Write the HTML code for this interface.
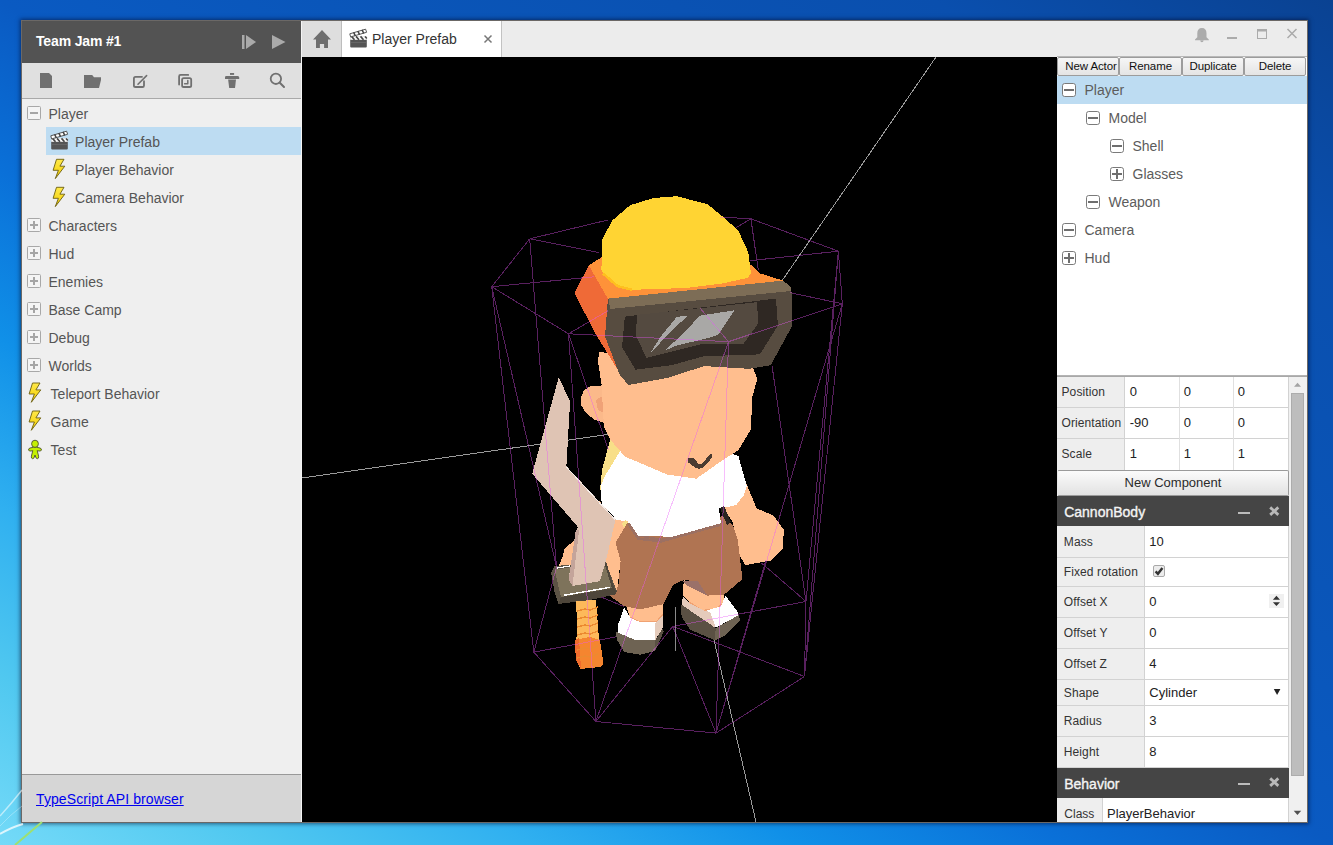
<!DOCTYPE html>
<html><head><meta charset="utf-8">
<style>
*{margin:0;padding:0;box-sizing:border-box}
html,body{width:1333px;height:845px;overflow:hidden}
body{position:relative;font-family:"Liberation Sans",sans-serif;
background:linear-gradient(to bottom left,#0a4292 0%,#0a4fae 15%,#0a55b8 35%,#0a5ac2 50%,#0a70d8 60%,#1090e8 70%,#30b0f0 80%,#50c8f0 90%,#74daf8 100%);}
.a{position:absolute}
#win{left:21px;top:20px;width:1287px;height:803px;border:1px solid #6b6866;background:#efefef;box-shadow:0 0 4px 1px rgba(0,10,40,.55)}
#side{left:0;top:0;width:279px;height:801px;background:#efefef}
#hdr{left:0;top:0;width:279px;height:42px;background:#535353}
#hdr .t{left:14px;top:12px;font-weight:bold;font-size:14px;color:#fff;letter-spacing:-0.15px}
#tool{left:0;top:42px;width:279px;height:36px;background:#e0e0e0;border-bottom:1px solid #a9a9a9}
#tree{left:0;top:78px;width:279px}
.row{position:absolute;height:28px;font-size:14px;color:#555;line-height:28px;white-space:nowrap}
.sel{background:#bddcf2}
#foot{left:0;top:753px;width:279px;height:48px;background:#d6d6d6;border-top:1px solid #999}
#foot a{position:absolute;left:14px;top:16px;font-size:14px;color:#0000ee;text-decoration:underline;letter-spacing:0.1px}
#sep{left:279px;top:0;width:1px;height:801px;background:#f4f4f4}
#tabs{left:280px;top:0;width:1005px;height:36px;background:#ececec}
#home{left:0;top:0;width:40px;height:36px;background:#dedede;border-right:1px solid #bdbdbd}
#tab{left:40px;top:0;width:160px;height:36px;background:#fff;border-right:1px solid #c2c2c2}
#view{left:280px;top:36px;width:755px;height:765px;background:#000;overflow:hidden}
#rp{left:1035px;top:36px;width:250px;height:765px;background:#fff}
</style></head><body>
<div id="win" class="a">
 <div id="side" class="a">
  <div id="hdr" class="a"><div class="t a">Team Jam #1</div></div>
  <div id="tool" class="a"></div>
  <div id="tree" class="a"><div class="sel a" style="left:24px;top:28px;width:255px;height:28px"></div><div class="row" style="left:26.5px;top:1px">Player</div><div class="row" style="left:53.1px;top:29px">Player Prefab</div><div class="row" style="left:53.1px;top:57px">Player Behavior</div><div class="row" style="left:53.1px;top:85px">Camera Behavior</div><div class="row" style="left:26.5px;top:113px">Characters</div><div class="row" style="left:26.5px;top:141px">Hud</div><div class="row" style="left:26.5px;top:169px">Enemies</div><div class="row" style="left:26.5px;top:197px">Base Camp</div><div class="row" style="left:26.5px;top:225px">Debug</div><div class="row" style="left:26.5px;top:253px">Worlds</div><div class="row" style="left:28.6px;top:281px">Teleport Behavior</div><div class="row" style="left:28.6px;top:309px">Game</div><div class="row" style="left:28.6px;top:337px">Test</div></div>
  <div id="foot" class="a"><a>TypeScript API browser</a></div>
 </div>
 <div id="sep" class="a"></div>
 <div id="tabs" class="a">
  <div id="home" class="a"></div>
  <div id="tab" class="a"><div class="a" style="left:30px;top:0;font-size:14px;line-height:36px;color:#333">Player Prefab</div></div>
 </div>
 <div id="view" class="a"><svg width="755" height="765" viewBox="0 0 755 765" shape-rendering="crispEdges" style="position:absolute;left:0;top:0"><line x1="0.0" y1="421.0" x2="358.0" y2="370.0" stroke="#9a9a9a" stroke-width="1"/>
<line x1="634.0" y1="0.0" x2="398.0" y2="343.0" stroke="#9a9a9a" stroke-width="1"/>
<line x1="454.0" y1="765.0" x2="412.0" y2="583.0" stroke="#9a9a9a" stroke-width="1"/>
<line x1="373.5" y1="550.0" x2="373.5" y2="594.0" stroke="#8a8a8a" stroke-width="1"/>
<polygon points="308.3,382.0 325.0,398.0 310.0,423.0 298.0,433.0 300.0,413.0" fill="#f8df88" />
<polygon points="442.0,421.0 454.7,451.4 471.3,458.5 481.9,472.7 480.7,491.6 468.9,503.5 442.9,508.2 435.7,494.0 431.0,465.6 421.6,451.4 433.0,433.0" fill="#ffbe8e" />
<polygon points="322.7,543.0 361.6,541.0 361.0,557.7 354.1,565.2 338.2,565.2 327.5,559.9" fill="#ffbe8e" />
<polygon points="381.8,523.0 405.3,535.0 422.3,533.0 421.3,546.0 413.8,552.4 400.0,553.5 387.2,545.0 380.8,538.6" fill="#ffbe8e" />
<polyline points="327.5,559.9 338.2,565.2 354.1,565.2 361.0,557.7" fill="none" stroke="#f0a272" stroke-width="1.5"/>
<polyline points="387.2,545.0 400.0,553.5 413.8,552.4 421.3,546.0" fill="none" stroke="#f0a272" stroke-width="1.5"/>
<polygon points="322.0,459.0 331.0,473.0 360.0,479.0 420.0,459.0 431.0,468.0 435.7,482.2 440.5,522.0 422.3,537.5 405.3,538.6 395.7,524.7 383.0,523.0 379.7,523.7 371.2,527.9 361.6,547.1 338.2,552.4 322.2,549.2 307.3,538.6 316.4,528.3 318.6,504.2 313.6,485.7" fill="#b07452" />
<polygon points="379.7,523.7 395.7,524.0 405.3,538.6 398.0,535.0 386.0,529.0" fill="#9b7169" />
<polyline points="327.0,467.0 335.0,478.5 360.0,482.5 421.0,465.0" fill="none" stroke="#9c7062" stroke-width="1.8"/>
<polygon points="322.2,550.3 328.6,561.0 338.2,565.2 354.1,565.2 361.0,558.8 361.0,570.5 353.1,583.3 333.9,583.3 315.8,575.9 315.8,568.4" fill="#ffffff" />
<polygon points="353.1,566.0 361.0,558.8 361.0,570.5 353.1,583.3" fill="#e5ccbc" />
<polygon points="314.2,574.8 333.9,583.3 353.1,583.3 361.0,571.0 361.6,574.8 353.1,594.0 338.2,597.7 322.2,595.0 314.7,582.3" fill="#6e6353" />
<polygon points="353.1,583.3 361.0,571.0 361.6,574.8 353.1,594.0" fill="#5a5043" />
<polygon points="380.8,539.6 387.2,546.0 403.2,554.0 419.1,549.2 423.4,538.6 436.2,555.6 436.2,558.8 413.8,570.5 408.5,568.4 379.7,549.2" fill="#ffffff" />
<polygon points="380.8,539.6 387.2,546.0 403.2,554.0 408.0,555.0 413.8,570.5 408.5,568.4 379.7,549.2" fill="#e5cbbb" />
<polygon points="378.6,547.1 413.8,571.1 437.2,557.7 437.8,564.1 422.3,579.1 412.7,583.3 388.2,572.7 379.7,559.9" fill="#6e6353" />
<polygon points="378.6,547.1 413.8,571.1 412.7,583.3 388.2,572.7 379.7,559.9" fill="#5a5043" />
<polygon points="320.0,391.0 365.0,411.0 394.4,415.0 423.8,395.0 436.4,399.0 444.8,429.0 442.0,438.0 434.3,447.9 431.0,449.0 416.8,451.4 419.2,468.0 369.5,479.8 336.3,478.6 326.9,465.6 315.0,463.2 299.7,446.7 298.5,430.1 302.0,420.6" fill="#ffffff" />
<polyline points="326.4,466.5 336.3,481.6 359.0,484.3 419.0,467.5" fill="none" stroke="#9c7062" stroke-width="2.6" stroke-linejoin="round"/>
<polygon points="418.0,451.0 422.0,449.0 429.0,465.0 425.0,468.0" fill="#2a2420" />
<polygon points="278.9,340.8 282.0,333.0 288.0,329.5 302.0,328.2 302.0,366.0 293.0,363.0 284.0,356.0 279.0,348.0" fill="#fbb98a" />
<polygon points="294.0,343.0 302.0,338.0 302.0,356.0 296.0,353.0" fill="#f0a277" />
<polygon points="297.0,295.0 451.1,311.4 455.3,321.9 450.1,340.8 449.0,372.3 436.4,393.3 419.6,403.8 394.4,421.7 365.0,417.5 323.0,399.6 308.3,382.8 302.0,370.2 299.5,327.0 296.0,305.0" fill="#ffbe8e" />
<polygon points="386.5,401.1 391.8,401.1 393.6,402.6 395.7,406.5 400.0,406.5 402.8,403.6 406.4,398.6 409.6,396.9 409.9,400.1 407.1,404.3 400.7,410.7 397.2,411.8 394.3,411.1 389.4,407.9 386.2,405.4" fill="#4a3b31" />
<polygon points="286.8,208.3 299.4,200.4 448.9,207.6 457.9,216.4 481.3,223.6 481.3,235.0 306.6,255.0 317.4,315.4 294.0,277.6 272.4,236.2" fill="#ef6a37" />
<polygon points="286.8,208.3 299.4,200.4 448.9,207.6 457.9,216.4 481.3,223.6 481.3,235.0 306.6,255.0 306.6,243.0" fill="#fe9239" />
<polygon points="286.8,208.3 272.4,236.2 294.0,277.6 317.4,315.4 306.6,243.4" fill="#ef6a37" />
<polygon points="299.4,213.0 300.3,182.4 310.2,163.5 328.2,148.2 351.6,141.0 375.0,139.2 405.6,147.3 420.0,159.0 436.2,173.4 446.2,195.0 448.9,216.6 445.3,221.0 420.0,226.5 384.0,231.0 330.0,232.8 315.6,229.2 301.2,216.6" fill="#ffd433" />
<polyline points="301.2,216.6 315.6,229.2 330.0,232.8" fill="none" stroke="#ffbf1f" stroke-width="2.5"/>
<polygon points="306.6,241.6 481.3,223.6 489.4,230.8 490.3,268.6 468.7,308.2 447.0,311.8 402.0,309.1 366.0,320.8 326.4,328.0 317.4,317.2 303.0,279.4 305.7,245.2" fill="#574c40" />
<polygon points="306.6,241.6 481.3,223.6 489.4,230.8 489.4,234.0 308.0,252.0" fill="#7d6d56" />
<polygon points="322.8,259.6 474.0,241.6 475.9,268.6 457.9,297.4 402.0,299.2 369.6,308.2 333.6,312.7 320.1,290.2" fill="#2f2823" />
<polygon points="335.4,257.8 455.2,245.2 456.0,266.8 441.6,286.6 402.0,286.6 366.0,295.6 344.4,301.0 333.6,277.6" fill="#544a40" />
<polygon points="397.5,258.7 432.6,253.3 416.4,277.6 405.6,281.2 375.0,288.4 362.4,293.8 384.0,274.0" fill="#a9a8a6" />
<polygon points="375.0,259.6 384.9,259.3 366.0,277.6 348.0,296.5 358.8,279.4" fill="#a9a8a6" />
<polygon points="296.5,443.0 313.6,463.0 326.4,464.3 313.6,485.7 318.6,504.2 315.0,534.6 303.6,505.2" fill="#ffbe8e" />
<path d="M320 467L323.5 463L326 465L322 471Z" fill="#f8df88"/>
<polygon points="255.3,511.8 260.0,501.4 262.9,491.0 271.4,484.4 276.0,481.0 275.0,511.0" fill="#ffbe8e" />
<polygon points="249.2,516.1 252.5,509.0 303.6,505.2 315.0,534.6 313.0,537.4 285.6,543.5 256.3,546.9 252.5,534.6" fill="#5c5345" />
<polygon points="252.5,512.8 267.6,510.4 303.6,506.5 311.0,531.0 259.0,540.0" fill="#7e735b" />
<line x1="255" y1="511" x2="267.6" y2="509" stroke="#fff" stroke-width="1.2"/>
<polygon points="256.8,320.1 268.1,344.7 264.4,409.2 313.6,462.2 303.6,505.2 297.9,524.1 270.5,529.0 266.7,521.0 275.7,469.8 230.2,416.7" fill="#dfc4b4" />
<polygon points="273.8,473.0 277.1,473.0 270.5,529.0 266.7,523.0" fill="#c4a49a" />
<line x1="264.4" y1="410" x2="313" y2="462.5" stroke="#f4ece8" stroke-width="1"/>
<polyline points="303.6,506.5 311.0,531.0" fill="none" stroke="#4e463a" stroke-width="2"/>
<polygon points="259.0,540.0 311.0,531.0 315.0,534.6 313.0,537.4 285.6,543.5 256.3,546.9" fill="#4e463a" />
<line x1="261.9" y1="538.3" x2="308.29999999999995" y2="530.3" stroke="#fff" stroke-width="1.4"/>
<polygon points="274.0,544.0 294.0,543.0 297.0,583.0 301.5,607.0 298.0,610.0 278.0,612.0 272.5,589.0 275.5,575.0" fill="#fdb95a" />
<polygon points="272.5,583.0 288.0,580.0 298.0,583.0 301.5,607.0 298.0,610.0 278.0,612.0" fill="#f5852f" />
<polygon points="272.5,583.0 277.0,581.0 279.0,612.0 274.0,603.0" fill="#f06c2c" />
<path d="M275 554L283 552L288 553L296 550" fill="none" stroke="#ec8a30" stroke-width="1.4"/>
<path d="M275 562L283 560L288 561L296 558" fill="none" stroke="#ec8a30" stroke-width="1.4"/>
<path d="M275 570L283 568L288 569L296 566" fill="none" stroke="#ec8a30" stroke-width="1.4"/>
<path d="M275 578L283 576L288 577L296 574" fill="none" stroke="#ec8a30" stroke-width="1.4"/>
<path d="M275 593L283 591L288 592L296 589" fill="none" stroke="#ec8a30" stroke-width="1.4"/>
<path d="M275 601L283 599L288 600L296 597" fill="none" stroke="#ec8a30" stroke-width="1.4"/>
<path d="M227.7 181.8L189.7 229.7M189.7 229.7L266.5 276.8M266.5 276.8L426.5 284.7M426.5 284.7L540.3 246.8M540.3 246.8L536.4 194.2M536.4 194.2L448.9 161.8M448.9 161.8L418.0 160.0M227.7 181.8L305.8 163.0M227.7 181.8L297.3 195.7M189.7 229.7L292.0 219.8M266.5 276.8L305.8 253.9M426.5 284.7L398.0 251.0M540.3 246.8L488.3 235.7M536.4 194.2L447.8 203.7M448.9 161.8L434.0 170.7M227.7 181.8L254.5 510.0M189.7 229.7L254.5 510.0M189.7 229.7L231.8 595.1M266.5 276.8L293.9 664.5M426.5 284.7L414.0 676.1M540.3 246.8L502.5 619.5M536.4 194.2L504.0 544.5M536.4 194.2L502.5 619.5M426.5 284.7L293.9 664.5M540.3 246.8L414.0 676.1M448.9 161.8L456.3 213.3M470.1 309.2L504.0 544.5M266.5 276.8L306.5 393.0M231.8 595.1L293.9 664.5M293.9 664.5L414.0 676.1M414.0 676.1L502.5 619.5M502.5 619.5L504.0 544.5M504.0 544.5L459.5 506.0M254.5 510.0L231.8 595.1M314.0 579.9L231.8 595.1M370.8 569.4L293.9 664.5M370.8 569.4L414.0 676.1M370.8 569.4L502.5 619.5M370.8 569.4L504.0 544.5M299.0 540.0L322.0 549.5M464.0 503.0L414.0 676.1" fill="none" stroke="#eb54fa" stroke-opacity="0.38" stroke-width="1" shape-rendering="crispEdges"/></svg>
</div>
 <div id="rp" class="a"><div class="a" style="left:0px;top:-1px;width:250px;height:1px;background:#b8b8b8"></div>
<div class="a" style="left:0px;top:0px;width:62px;height:19px;background:linear-gradient(#f6f6f6,#e4e4e4);border:1px solid #9c9c9c;border-radius:2px;font-size:11.5px;line-height:17px;text-align:center;color:#111;letter-spacing:-0.1px;white-space:nowrap;overflow:hidden;padding-left:6px;">New Actor</div>
<div class="a" style="left:62px;top:0px;width:63px;height:19px;background:linear-gradient(#f6f6f6,#e4e4e4);border:1px solid #9c9c9c;border-radius:2px;font-size:11.5px;line-height:17px;text-align:center;color:#111;letter-spacing:-0.1px;white-space:nowrap;overflow:hidden;">Rename</div>
<div class="a" style="left:125px;top:0px;width:62px;height:19px;background:linear-gradient(#f6f6f6,#e4e4e4);border:1px solid #9c9c9c;border-radius:2px;font-size:11.5px;line-height:17px;text-align:center;color:#111;letter-spacing:-0.1px;white-space:nowrap;overflow:hidden;">Duplicate</div>
<div class="a" style="left:187px;top:0px;width:62px;height:19px;background:linear-gradient(#f6f6f6,#e4e4e4);border:1px solid #9c9c9c;border-radius:2px;font-size:11.5px;line-height:17px;text-align:center;color:#111;letter-spacing:-0.1px;white-space:nowrap;overflow:hidden;">Delete</div>
<div class="a" style="left:0px;top:19px;width:250px;height:28px;background:#bddcf2"></div>
<div class="a" style="left:27.5px;top:25.0px;font-size:14px;line-height:16.10px;color:#5c5c5c;white-space:nowrap;">Player</div>
<div class="a" style="left:51.5px;top:53.0px;font-size:14px;line-height:16.10px;color:#5c5c5c;white-space:nowrap;">Model</div>
<div class="a" style="left:75.5px;top:81.0px;font-size:14px;line-height:16.10px;color:#5c5c5c;white-space:nowrap;">Shell</div>
<div class="a" style="left:75.5px;top:109.0px;font-size:14px;line-height:16.10px;color:#5c5c5c;white-space:nowrap;">Glasses</div>
<div class="a" style="left:51.5px;top:137.0px;font-size:14px;line-height:16.10px;color:#5c5c5c;white-space:nowrap;">Weapon</div>
<div class="a" style="left:27.5px;top:165.0px;font-size:14px;line-height:16.10px;color:#5c5c5c;white-space:nowrap;">Camera</div>
<div class="a" style="left:27.5px;top:193.0px;font-size:14px;line-height:16.10px;color:#5c5c5c;white-space:nowrap;">Hud</div>
<div class="a" style="left:0px;top:318px;width:250px;height:1px;background:#b4b4b4"></div>
<div class="a" style="left:0px;top:319px;width:250px;height:1px;background:#a8a8a8"></div>
<div class="a" style="left:0px;top:320px;width:232px;height:445px;background:#fff"></div>
<div class="a" style="left:0px;top:320px;width:67px;height:31px;background:#eeeeee"></div>
<div class="a" style="left:0px;top:350px;width:231px;height:1px;background:#d2d2d2"></div>
<div class="a" style="left:4.5px;top:328.9px;font-size:12px;line-height:13.80px;color:#333;white-space:nowrap;letter-spacing:0.1px">Position</div>
<div class="a" style="left:72.7px;top:327.5px;font-size:13px;line-height:14.95px;color:#222;white-space:nowrap;">0</div>
<div class="a" style="left:126.7px;top:327.5px;font-size:13px;line-height:14.95px;color:#222;white-space:nowrap;">0</div>
<div class="a" style="left:180.7px;top:327.5px;font-size:13px;line-height:14.95px;color:#222;white-space:nowrap;">0</div>
<div class="a" style="left:0px;top:351px;width:67px;height:31px;background:#eeeeee"></div>
<div class="a" style="left:0px;top:381px;width:231px;height:1px;background:#d2d2d2"></div>
<div class="a" style="left:4.5px;top:359.9px;font-size:12px;line-height:13.80px;color:#333;white-space:nowrap;letter-spacing:0.1px">Orientation</div>
<div class="a" style="left:72.7px;top:358.5px;font-size:13px;line-height:14.95px;color:#222;white-space:nowrap;">-90</div>
<div class="a" style="left:126.7px;top:358.5px;font-size:13px;line-height:14.95px;color:#222;white-space:nowrap;">0</div>
<div class="a" style="left:180.7px;top:358.5px;font-size:13px;line-height:14.95px;color:#222;white-space:nowrap;">0</div>
<div class="a" style="left:0px;top:382px;width:67px;height:31px;background:#eeeeee"></div>
<div class="a" style="left:4.5px;top:390.9px;font-size:12px;line-height:13.80px;color:#333;white-space:nowrap;letter-spacing:0.1px">Scale</div>
<div class="a" style="left:72.7px;top:389.5px;font-size:13px;line-height:14.95px;color:#222;white-space:nowrap;">1</div>
<div class="a" style="left:126.7px;top:389.5px;font-size:13px;line-height:14.95px;color:#222;white-space:nowrap;">1</div>
<div class="a" style="left:180.7px;top:389.5px;font-size:13px;line-height:14.95px;color:#222;white-space:nowrap;">1</div>
<div class="a" style="left:67px;top:320px;width:1px;height:93px;background:#d2d2d2"></div>
<div class="a" style="left:122px;top:320px;width:1px;height:93px;background:#e0e0e0"></div>
<div class="a" style="left:176px;top:320px;width:1px;height:93px;background:#e0e0e0"></div>
<div class="a" style="left:231px;top:320px;width:1px;height:445px;background:#d2d2d2"></div>
<div class="a" style="left:0px;top:413px;width:232px;height:26px;background:linear-gradient(#fbfbfb,#e2e2e2);border:1px solid #9a9a9a;border-left-color:#e8e8e8;border-radius:2px;font-size:13px;line-height:24px;text-align:center;color:#2a2a2a">New Component</div>
<div class="a" style="left:0px;top:439px;width:232px;height:30px;background:#454545"></div>
<div class="a" style="left:7.2px;top:446.5px;font-size:14px;line-height:16.10px;color:#f4f4f4;white-space:nowrap;-webkit-text-stroke:0.35px #f4f4f4">CannonBody</div>
<div class="a" style="left:0px;top:469px;width:87px;height:32px;background:#eeeeee"></div>
<div class="a" style="left:0px;top:500px;width:231px;height:1px;background:#d2d2d2"></div>
<div class="a" style="left:6.8px;top:478.9px;font-size:12px;line-height:13.80px;color:#333;white-space:nowrap;letter-spacing:0.1px">Mass</div>
<div class="a" style="left:92.3px;top:478.0px;font-size:13px;line-height:14.95px;color:#222;white-space:nowrap;">10</div>
<div class="a" style="left:0px;top:501px;width:87px;height:29px;background:#eeeeee"></div>
<div class="a" style="left:0px;top:529px;width:231px;height:1px;background:#d2d2d2"></div>
<div class="a" style="left:6.8px;top:509.4px;font-size:12px;line-height:13.80px;color:#333;white-space:nowrap;letter-spacing:0.1px">Fixed rotation</div>
<div class="a" style="left:0px;top:530px;width:87px;height:31px;background:#eeeeee"></div>
<div class="a" style="left:0px;top:560px;width:231px;height:1px;background:#d2d2d2"></div>
<div class="a" style="left:6.8px;top:538.9px;font-size:12px;line-height:13.80px;color:#333;white-space:nowrap;letter-spacing:0.1px">Offset X</div>
<div class="a" style="left:92.3px;top:538.0px;font-size:13px;line-height:14.95px;color:#222;white-space:nowrap;">0</div>
<div class="a" style="left:0px;top:561px;width:87px;height:31px;background:#eeeeee"></div>
<div class="a" style="left:0px;top:591px;width:231px;height:1px;background:#d2d2d2"></div>
<div class="a" style="left:6.8px;top:569.9px;font-size:12px;line-height:13.80px;color:#333;white-space:nowrap;letter-spacing:0.1px">Offset Y</div>
<div class="a" style="left:92.3px;top:569.0px;font-size:13px;line-height:14.95px;color:#222;white-space:nowrap;">0</div>
<div class="a" style="left:0px;top:592px;width:87px;height:31px;background:#eeeeee"></div>
<div class="a" style="left:0px;top:622px;width:231px;height:1px;background:#d2d2d2"></div>
<div class="a" style="left:6.8px;top:600.9px;font-size:12px;line-height:13.80px;color:#333;white-space:nowrap;letter-spacing:0.1px">Offset Z</div>
<div class="a" style="left:92.3px;top:600.0px;font-size:13px;line-height:14.95px;color:#222;white-space:nowrap;">4</div>
<div class="a" style="left:0px;top:623px;width:87px;height:26px;background:#eeeeee"></div>
<div class="a" style="left:0px;top:648px;width:231px;height:1px;background:#d2d2d2"></div>
<div class="a" style="left:6.8px;top:629.9px;font-size:12px;line-height:13.80px;color:#333;white-space:nowrap;letter-spacing:0.1px">Shape</div>
<div class="a" style="left:92.3px;top:629.0px;font-size:13px;line-height:14.95px;color:#222;white-space:nowrap;">Cylinder</div>
<div class="a" style="left:0px;top:649px;width:87px;height:31px;background:#eeeeee"></div>
<div class="a" style="left:0px;top:679px;width:231px;height:1px;background:#d2d2d2"></div>
<div class="a" style="left:6.8px;top:657.9px;font-size:12px;line-height:13.80px;color:#333;white-space:nowrap;letter-spacing:0.1px">Radius</div>
<div class="a" style="left:92.3px;top:657.0px;font-size:13px;line-height:14.95px;color:#222;white-space:nowrap;">3</div>
<div class="a" style="left:0px;top:680px;width:87px;height:31px;background:#eeeeee"></div>
<div class="a" style="left:0px;top:710px;width:231px;height:1px;background:#d2d2d2"></div>
<div class="a" style="left:6.8px;top:688.9px;font-size:12px;line-height:13.80px;color:#333;white-space:nowrap;letter-spacing:0.1px">Height</div>
<div class="a" style="left:92.3px;top:688.0px;font-size:13px;line-height:14.95px;color:#222;white-space:nowrap;">8</div>
<div class="a" style="left:87px;top:469px;width:1px;height:241px;background:#d2d2d2"></div>
<div class="a" style="left:0px;top:711px;width:232px;height:30px;background:#454545"></div>
<div class="a" style="left:7.2px;top:718.5px;font-size:14px;line-height:16.10px;color:#f4f4f4;white-space:nowrap;-webkit-text-stroke:0.35px #f4f4f4">Behavior</div>
<div class="a" style="left:0px;top:741px;width:45px;height:24px;background:#eeeeee"></div>
<div class="a" style="left:45px;top:741px;width:1px;height:24px;background:#d2d2d2"></div>
<div class="a" style="left:7.3px;top:750.7px;font-size:12px;line-height:13.80px;color:#333;white-space:nowrap;">Class</div>
<div class="a" style="left:50.0px;top:749.5px;font-size:13px;line-height:14.95px;color:#222;white-space:nowrap;">PlayerBehavior</div>
<div class="a" style="left:232px;top:320px;width:18px;height:445px;background:#f0f0f0"></div>
<div class="a" style="left:234px;top:336px;width:13px;height:383px;background:#bdbdbd;border:1px solid #acacac"></div>
</div>
</div>
<svg class="a" style="left:0;top:0;pointer-events:none" width="1333" height="845" viewBox="0 0 1333 845">
<g fill="#aaaaaa">
<rect x="242" y="35" width="2.5" height="14"/>
<path d="M246 35 L256 42 L246 49Z"/>
<path d="M272 35 L285.5 42 L272 49Z"/>
</g>
<g fill="#707070" stroke="none">
<path d="M40 73H49L52 76V88H40Z"/>
<path d="M84 75H92.2L94 77.3H101V80L99 88H84Z"/>
</g>
<g fill="none" stroke="#707070" stroke-width="1.8" stroke-linecap="round" stroke-linejoin="round">
<path d="M142 76.8H135.5Q133.9 76.8 133.9 78.4V85.4Q133.9 87 135.5 87H142.5Q144 87 144 85.4V81.2"/>
<path d="M138 84.2L146.6 75.6" stroke-width="1.6"/>
<path d="M188.2 74.9H180.6Q179.1 74.9 179.1 76.4V84.5"/>
<rect x="182.1" y="78.1" width="9.1" height="8.9" rx="1.6"/>
<path d="M184.6 83.7H187.8V80.4" stroke-width="1.5"/>
<circle cx="275.9" cy="78.8" r="5.2"/>
<path d="M279.8 82.8L284 87" stroke-width="2"/>
</g>
<g fill="#707070">
<rect x="230" y="73" width="4.1" height="1.9"/>
<path d="M226.3 75.9H237.8Q239.2 75.9 239.2 77.4V79H225V77.3Q225 75.9 226.3 75.9Z"/>
<path d="M228.1 79.6H236L235 88H229.2Z"/>
</g>
<g fill="#6e6e6e">
<path d="M313 39.6L322 30L331 39.6H328V48H324.1V44.1H319.9V48H316V39.6Z"/>
</g>
<defs><linearGradient id="bg" x1="0" y1="0" x2="0" y2="1"><stop offset="0" stop-color="#ffe94a"/><stop offset="1" stop-color="#f2cc00"/></linearGradient></defs>
<rect x="27.5" y="106.5" width="13" height="13" rx="1" fill="#f4f4f4" stroke="#a8a8a8"/><rect x="30" y="112" width="8" height="2" fill="#a5a5a5"/>
<rect x="27.5" y="218.5" width="13" height="13" rx="1" fill="#f4f4f4" stroke="#a8a8a8"/><rect x="30" y="224" width="8" height="2" fill="#a5a5a5"/><rect x="33" y="221" width="2" height="8" fill="#a5a5a5"/>
<rect x="27.5" y="246.5" width="13" height="13" rx="1" fill="#f4f4f4" stroke="#a8a8a8"/><rect x="30" y="252" width="8" height="2" fill="#a5a5a5"/><rect x="33" y="249" width="2" height="8" fill="#a5a5a5"/>
<rect x="27.5" y="274.5" width="13" height="13" rx="1" fill="#f4f4f4" stroke="#a8a8a8"/><rect x="30" y="280" width="8" height="2" fill="#a5a5a5"/><rect x="33" y="277" width="2" height="8" fill="#a5a5a5"/>
<rect x="27.5" y="302.5" width="13" height="13" rx="1" fill="#f4f4f4" stroke="#a8a8a8"/><rect x="30" y="308" width="8" height="2" fill="#a5a5a5"/><rect x="33" y="305" width="2" height="8" fill="#a5a5a5"/>
<rect x="27.5" y="330.5" width="13" height="13" rx="1" fill="#f4f4f4" stroke="#a8a8a8"/><rect x="30" y="336" width="8" height="2" fill="#a5a5a5"/><rect x="33" y="333" width="2" height="8" fill="#a5a5a5"/>
<rect x="27.5" y="358.5" width="13" height="13" rx="1" fill="#f4f4f4" stroke="#a8a8a8"/><rect x="30" y="364" width="8" height="2" fill="#a5a5a5"/><rect x="33" y="361" width="2" height="8" fill="#a5a5a5"/>
<g transform="translate(0,0)">
<rect x="51.2" y="138.2" width="16.6" height="11.4" rx="1" fill="#555"/>
<rect x="51.2" y="138.2" width="16.6" height="3.6" fill="#fff"/>
<path d="M52.5 138.4L55.5 141.8M57 138.4L60 141.8M61.5 138.4L64.5 141.8M66 138.4L67.8 140.5" stroke="#444" stroke-width="1.6"/>
<path d="M50.8 135.8L66.6 131.2L67.6 134.3L51.6 138.9Z" fill="#fff" stroke="#444" stroke-width="0.9"/>
<path d="M54.6 134.3L56.4 137.8M58.8 133.1L60.6 136.6M63 131.9L64.8 135.4" stroke="#444" stroke-width="1.5"/>
<rect x="52" y="144" width="15" height="1" fill="#666"/>
</g>
<path d="M56.5 159.3 L64.0 159.3 L59.9 166.2 L64.8 166.2 L55.3 178.6 L58.4 170.3 L53.1 170.3Z" fill="url(#bg)" stroke="#6b5e10" stroke-width="0.9" stroke-linejoin="round"/>
<path d="M56.5 187.3 L64.0 187.3 L59.9 194.2 L64.8 194.2 L55.3 206.6 L58.4 198.3 L53.1 198.3Z" fill="url(#bg)" stroke="#6b5e10" stroke-width="0.9" stroke-linejoin="round"/>
<path d="M32.5 383.0 L40.0 383.0 L35.9 389.9 L40.8 389.9 L31.3 402.3 L34.4 394.0 L29.1 394.0Z" fill="url(#bg)" stroke="#6b5e10" stroke-width="0.9" stroke-linejoin="round"/>
<path d="M32.5 411.0 L40.0 411.0 L35.9 417.9 L40.8 417.9 L31.3 430.3 L34.4 422.0 L29.1 422.0Z" fill="url(#bg)" stroke="#6b5e10" stroke-width="0.9" stroke-linejoin="round"/>
<g transform="translate(0,0)" fill="#c4f000" stroke="#4d5030" stroke-width="0.9" stroke-linejoin="round">
<path d="M33.7 447.2 L30 448 Q28.3 448.6 28.6 450 Q29 451.4 31 451 L32.8 450.6 L31.4 456.2 Q31 458.6 32.6 458.7 Q33.8 458.8 34.3 457 L35 455 L35.7 457 Q36.2 458.8 37.4 458.7 Q39 458.6 38.6 456.2 L37.2 450.6 L39 451 Q41 451.4 41.4 450 Q41.7 448.6 40 448 L36.3 447.2Z"/>
<ellipse cx="35" cy="443.8" rx="3.4" ry="3.6"/>
</g>
<g transform="translate(299,-102)">
<rect x="51.2" y="138.2" width="16.6" height="11.4" rx="1" fill="#555"/>
<rect x="51.2" y="138.2" width="16.6" height="3.6" fill="#fff"/>
<path d="M52.5 138.4L55.5 141.8M57 138.4L60 141.8M61.5 138.4L64.5 141.8M66 138.4L67.8 140.5" stroke="#444" stroke-width="1.6"/>
<path d="M50.8 135.8L66.6 131.2L67.6 134.3L51.6 138.9Z" fill="#fff" stroke="#444" stroke-width="0.9"/>
<path d="M54.6 134.3L56.4 137.8M58.8 133.1L60.6 136.6M63 131.9L64.8 135.4" stroke="#444" stroke-width="1.5"/>
<rect x="52" y="144" width="15" height="1" fill="#666"/>
</g>
<path d="M484.5 35.5L491.5 42.5M491.5 35.5L484.5 42.5" stroke="#777" stroke-width="1.5"/>
<g fill="none" stroke="#ababab">
<path d="M1227 38H1237" stroke-width="2"/>
<rect x="1257.5" y="29.5" width="9" height="9"/>
<path d="M1257 30.5H1267" stroke-width="2"/>
<path d="M1287.5 29L1296.5 38M1296.5 29L1287.5 38" stroke-width="1.5"/>
</g>
<path d="M1201.9 28Q1197.3 28 1197.3 33.5V37.3L1195 39.4V40.2H1208.8V39.4L1206.5 37.3V33.5Q1206.5 28 1201.9 28ZM1200.2 40.6Q1200.4 42.2 1201.9 42.2Q1203.4 42.2 1203.6 40.6Z" fill="#ababab"/>
<rect x="1062.5" y="83.5" width="13" height="13" rx="2.2" fill="#fff" stroke="#7a7a7a"/><rect x="1064" y="89" width="10" height="2" fill="#6e6e6e"/>
<rect x="1086.5" y="111.5" width="13" height="13" rx="2.2" fill="#fff" stroke="#7a7a7a"/><rect x="1088" y="117" width="10" height="2" fill="#6e6e6e"/>
<rect x="1110.5" y="139.5" width="13" height="13" rx="2.2" fill="#fff" stroke="#7a7a7a"/><rect x="1112" y="145" width="10" height="2" fill="#6e6e6e"/>
<rect x="1110.5" y="167.5" width="13" height="13" rx="2.2" fill="#fff" stroke="#7a7a7a"/><rect x="1112" y="173" width="10" height="2" fill="#6e6e6e"/>
<rect x="1116" y="169" width="2" height="10" fill="#6e6e6e"/>
<rect x="1086.5" y="195.5" width="13" height="13" rx="2.2" fill="#fff" stroke="#7a7a7a"/><rect x="1088" y="201" width="10" height="2" fill="#6e6e6e"/>
<rect x="1062.5" y="223.5" width="13" height="13" rx="2.2" fill="#fff" stroke="#7a7a7a"/><rect x="1064" y="229" width="10" height="2" fill="#6e6e6e"/>
<rect x="1062.5" y="251.5" width="13" height="13" rx="2.2" fill="#fff" stroke="#7a7a7a"/><rect x="1064" y="257" width="10" height="2" fill="#6e6e6e"/>
<rect x="1068" y="253" width="2" height="10" fill="#6e6e6e"/>
<rect x="1238" y="512" width="12" height="2" fill="#bbb"/><path d="M1270.2 507.4L1278.3 514.9M1278.3 507.4L1270.2 514.9" stroke="#b8b8b8" stroke-width="2.8"/>
<rect x="1238" y="783" width="12" height="2" fill="#bbb"/><path d="M1270.2 778.4L1278.3 785.9M1278.3 778.4L1270.2 785.9" stroke="#b8b8b8" stroke-width="2.8"/>
<rect x="1153.5" y="565.5" width="11" height="11" rx="1.5" fill="#ececec" stroke="#a9a9a9"/><path d="M1155.6 571.4L1157.9 573.8L1162.4 567.9" fill="none" stroke="#333" stroke-width="2.4"/>
<rect x="1269" y="594" width="15" height="14" fill="#f0f0f0"/><path d="M1272.9 599.7L1276.45 595.8L1280 599.7Z M1272.9 602.2L1280 602.2L1276.45 606Z" fill="#333"/>
<path d="M1273.8 689L1280.4 689L1277.1 695Z" fill="#222"/>
<path d="M1294 386.8L1297.5 382.8L1301 386.8Z" fill="#a3a3a3"/><path d="M1293.7 810.8L1301.2 810.8L1297.45 815Z" fill="#505050"/>
<g fill="none">
<path d="M0 816Q11 804 22 790" stroke="#fff" stroke-opacity=".55" stroke-width="1.5"/>
<path d="M0 834Q12 827 23 824" stroke="#fff" stroke-opacity=".75" stroke-width="2"/>
<path d="M0 826Q10 815 22 806" stroke="#fff" stroke-opacity=".3" stroke-width="1"/>
<path d="M15 845L42 822" stroke="#9ee070" stroke-width="2"/>
</g>
</svg>
</body></html>
